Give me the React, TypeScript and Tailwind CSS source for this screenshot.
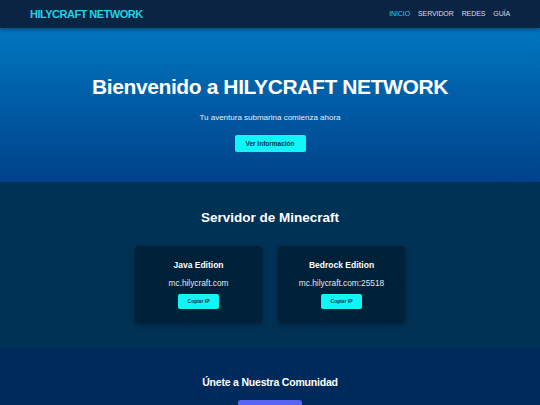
import React from 'react';

const servers = [
    { name: 'Java Edition', ip: 'mc.hilycraft.com' },
    { name: 'Bedrock Edition', ip: 'mc.hilycraft.com:25518' },
];

export default function App() {
    return (
        <div className="min-h-screen bg-[#002a5c] text-white font-['Liberation_Sans',Arial,sans-serif]">
            {/* Barra de navegación */}
            <nav className="relative z-10 h-[28px] bg-[#0b2443] flex items-center justify-between px-[30px] shadow-[0_2px_4px_rgba(0,0,0,0.35)]">
                <span className="text-[11px] font-bold text-[#1fd3e6] tracking-[-0.5px]">HILYCRAFT NETWORK</span>
                <ul className="flex items-center gap-[8px] text-[7px] text-[#d9dee6] tracking-[-0.1px]">
                    <li className="text-[#1fd3e6]">INICIO</li>
                    <li>SERVIDOR</li>
                    <li>REDES</li>
                    <li>GUÍA</li>
                </ul>
            </nav>

            {/* Portada */}
            <section className="h-[154px] bg-gradient-to-b from-[#0076c0] to-[#00428a] flex flex-col items-center pt-[48px]">
                <h1 className="text-[21px] leading-none font-bold tracking-[-0.4px]">Bienvenido a HILYCRAFT NETWORK</h1>
                <p className="mt-[17px] text-[8px] leading-none text-[#e6eef7]">Tu aventura submarina comienza ahora</p>
                <button className="mt-[13px] w-[71px] h-[17px] rounded-[2px] bg-[#12f5f7] text-[#053247] text-[6.5px] font-bold">
                    Ver Información
                </button>
            </section>

            {/* Servidor */}
            <section className="h-[166px] bg-[#003256] flex flex-col items-center pt-[29px]">
                <h2 className="text-[13.5px] leading-none font-bold">Servidor de Minecraft</h2>
                <div className="mt-[21px] flex gap-[16px]">
                    {servers.map((s) => (
                        <div
                            key={s.name}
                            className="w-[127px] h-[77px] rounded-[4px] bg-[#00213a] shadow-[0_2px_6px_rgba(0,0,0,0.35)] flex flex-col items-center pt-[15px]"
                        >
                            <h3 className="text-[8.5px] leading-none font-bold">{s.name}</h3>
                            <p className="mt-[10px] text-[8.3px] leading-none text-[#e2e8f0]">{s.ip}</p>
                            <button className="mt-[7px] w-[41px] h-[15px] rounded-[2px] bg-[#12f5f7] text-[#053247] text-[5px] font-bold">
                                Copiar IP
                            </button>
                        </div>
                    ))}
                </div>
            </section>

            {/* Comunidad */}
            <section className="h-[57px] bg-[#002a5c] flex flex-col items-center pt-[29px] overflow-hidden">
                <h2 className="text-[10.5px] leading-none font-bold tracking-[-0.2px]">Únete a Nuestra Comunidad</h2>
                <button className="mt-[12px] w-[64px] h-[20px] shrink-0 rounded-[3px] bg-[#5865f2]"></button>
            </section>
        </div>
    );
}
